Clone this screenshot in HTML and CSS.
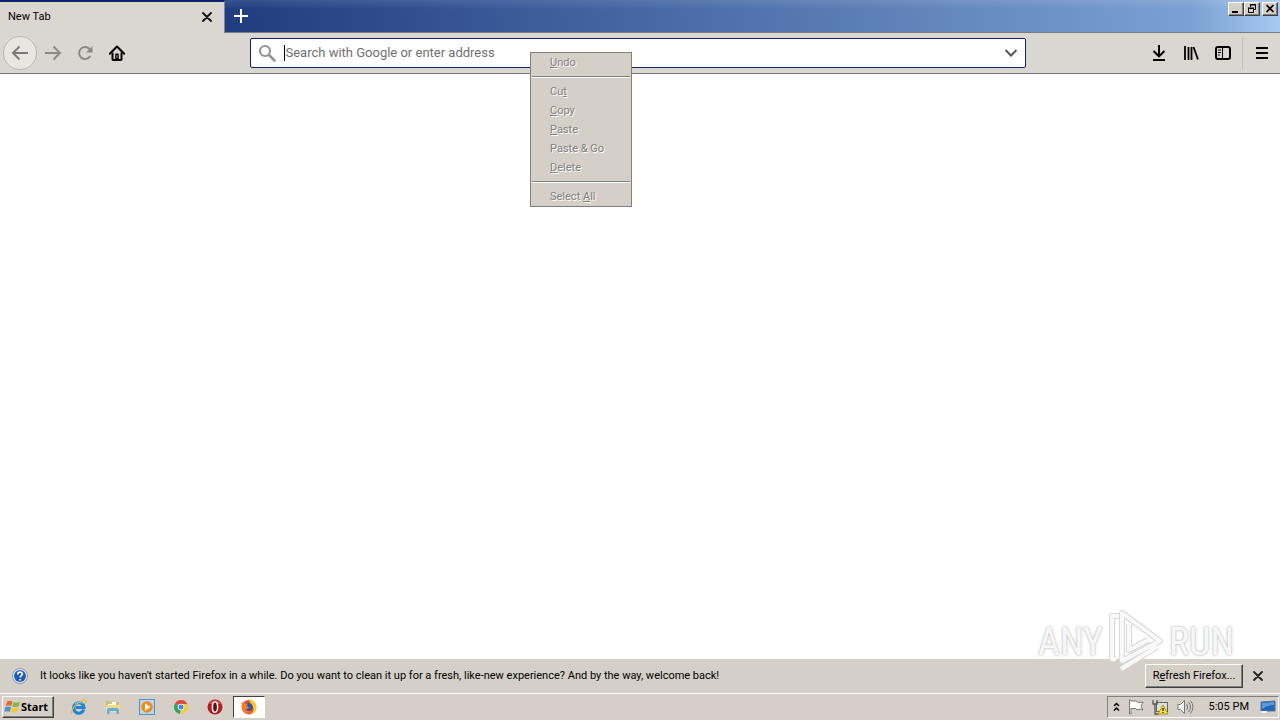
FILE: index.html
```html
<!DOCTYPE html>
<html lang="en">
<head>
<meta charset="utf-8">
<title>New Tab</title>
<link rel="stylesheet" href="styles.css">
</head>
<body>
<header class="tabstrip">
  <div class="tab">
    <button class="tab-label">New Tab</button>
    <button class="icon-btn tab-close" aria-label="Close tab"><svg width="10" height="10" viewBox="0 0 10 10"><path d="M1 1l8 8M9 1l-8 8" stroke="#111" stroke-width="1.8" stroke-linecap="round"/></svg></button>
  </div>
  <button class="icon-btn new-tab" aria-label="Open a new tab"><svg width="14" height="14" viewBox="0 0 14 14"><path d="M7 0v14M0 7h14" stroke="#fff" stroke-width="2"/></svg></button>
  <div class="window-controls">
    <button class="win-btn" aria-label="Minimize"><svg width="14" height="12" viewBox="0 0 14 12"><path d="M3 9h6" stroke="#000" stroke-width="2"/></svg></button>
    <button class="win-btn" aria-label="Restore"><svg width="14" height="12" viewBox="0 0 14 12"><path d="M5.500 4V1.500h5v5H8M5 2h6M3.500 5.500h5v4h-5zM3 5h6" fill="none" stroke="#000"/></svg></button>
    <button class="win-btn win-close" aria-label="Close"><svg width="14" height="12" viewBox="0 0 14 12"><path d="M3.500 2l7 7M10.500 2l-7 7" stroke="#000" stroke-width="1.600"/></svg></button>
  </div>
</header>

<nav class="toolbar">
  <div class="nav-buttons">
    <button class="icon-btn back" aria-label="Back"><svg width="18" height="16" viewBox="0 0 18 16"><path d="M17 8H2M8.500 1.500L2 8l6.500 6.500" fill="none" stroke="#7d7b77" stroke-width="2"/></svg></button>
    <button class="icon-btn tool" aria-label="Forward"><svg width="18" height="16" viewBox="0 0 18 16"><path d="M1 8h15M9.500 1.500L16 8l-6.500 6.500" fill="none" stroke="#8b8985" stroke-width="2"/></svg></button>
    <button class="icon-btn tool" aria-label="Reload"><svg width="16" height="16" viewBox="0 0 16 16"><path d="M13.300 11a6 6 0 1 1-.3-6.500" fill="none" stroke="#8b8985" stroke-width="2"/><path d="M15.500 1v6.500H9z" fill="#8b8985"/></svg></button>
    <button class="icon-btn tool" aria-label="Home"><svg width="16" height="16" viewBox="0 0 16 16"><path d="M.8 8.700L8 1.500l7.200 7.200" fill="none" stroke="#000" stroke-width="2" stroke-linecap="round" stroke-linejoin="round"/><path d="M3.500 7.500v6.700c0 .5.300.8.800.8h7.400c.5 0 .8-.3.800-.8V7.500" fill="none" stroke="#000" stroke-width="2"/><path d="M6.200 15V9.500c0-.6.4-1 1-1h1.600c.6 0 1 .4 1 1V15z"/><path d="M8 10v3" stroke="#aaa"/></svg></button>
  </div>
  <div class="urlbar">
    <svg class="search-icon" width="18" height="18" viewBox="0 0 18 18"><circle cx="7" cy="7" r="5" fill="none" stroke="#949494" stroke-width="2.200"/><path d="M11 11l5.500 5.500" stroke="#949494" stroke-width="2.600" stroke-linecap="round"/></svg>
    <span class="caret"></span>
    <input class="url-input" type="text" aria-label="Address" placeholder="Search with Google or enter address">
    <button class="icon-btn history" aria-label="Show history"><svg width="14" height="10" viewBox="0 0 14 10"><path d="M1.500 2L7 7.500 12.500 2" fill="none" stroke="#555" stroke-width="2"/></svg></button>
  </div>
  <div class="tools">
    <button class="icon-btn tool" aria-label="Downloads"><svg width="16" height="18" viewBox="0 0 16 18"><path d="M8 1v11M2.500 7L8 12.300 13.500 7M2 16h12" fill="none" stroke="#000" stroke-width="2"/></svg></button>
    <button class="icon-btn tool" aria-label="Library"><svg width="16" height="16" viewBox="0 0 16 16"><path d="M2 1v14M5.500 2v13M8.500 2v13M10.500 2l4.500 12.500" stroke="#000" stroke-width="1.800"/></svg></button>
    <button class="icon-btn tool" aria-label="Sidebars"><svg width="16" height="14" viewBox="0 0 16 14"><rect x="1" y="1" width="14" height="12" rx="2" fill="none" stroke="#000" stroke-width="2"/><path d="M7.500 1v12" stroke="#000"/><path d="M3 4h3M3 6.500h3M3 9h2" stroke="#000"/></svg></button>
    <button class="icon-btn app-menu" aria-label="Open menu"><svg width="12" height="14" viewBox="0 0 12 14"><path d="M0 2h12M0 7h12M0 12h12" stroke="#000" stroke-width="2"/></svg></button>
  </div>
</nav>

<main class="page"></main>

<section class="notification">
  <svg class="help" width="16" height="16" viewBox="0 0 16 16"><circle cx="8" cy="8" r="7.500" fill="#eef3fb" stroke="#8793ad"/><circle cx="8" cy="8" r="6" fill="#2159b8"/><path d="M5.800 6.400c0-3 4.600-2.900 4.600-.3 0 1.500-2.200 1.600-2.200 3.300M8.200 11v1.600" fill="none" stroke="#fff" stroke-width="1.700"/></svg>
  <p class="message">It looks like you haven't started Firefox in a while. Do you want to clean it up for a fresh, like-new experience? And by the way, welcome back!</p>
  <button class="refresh">R<u>e</u>fresh Firefox...</button>
  <button class="icon-btn dismiss" aria-label="Dismiss"><svg width="10" height="10" viewBox="0 0 10 10"><path d="M1 1l8 8M9 1l-8 8" stroke="#222" stroke-width="1.800" stroke-linecap="round"/></svg></button>
</section>

<footer class="taskbar">
  <button class="start"><svg width="17" height="16" viewBox="0 0 17 16"><path d="M3 2.500Q6 .8 8.500 2.500L7.300 7Q4.500 5.700 1.800 7z" fill="#e9682f"/><path d="M9.500 3Q12.500 4.500 16 2.500L14.800 7Q11.500 8.800 8.300 7.300z" fill="#84b840"/><path d="M1.500 8Q4.500 6.800 7 8.200L5.800 12.800Q3 11.500.3 12.800z" fill="#4a90d4"/><path d="M8 8.500q3.200 1.500 6.500-.2l-1.200 4.500q-3.300 1.700-6.500 0z" fill="#f6c63c"/></svg><span>Start</span></button>
  <div class="quick">
    <button class="icon-btn task" aria-label="Internet Explorer"><svg width="16" height="16" viewBox="0 0 16 16"><path d="M12.800 10.500A5.200 5.200 0 1 1 13 8.500H4.500" fill="none" stroke="#1f86d2" stroke-width="3"/><path d="M1 14.500C-1 11 8 1 13.500 1c2 0 1.600 2.500.8 4" fill="none" stroke="#e9b92e" stroke-width="1.200"/><path d="M4 4.500Q8 1.500 11.500 4.500" fill="none" stroke="#7dd0f3"/></svg></button>
    <button class="icon-btn task" aria-label="Windows Explorer"><svg width="16" height="16" viewBox="0 0 16 16"><path d="M1 2h5l1 1h7v10H1z" fill="#dfb958"/><path d="M3 3h8v3H3z" fill="#fff"/><path d="M3 4h4" stroke="#49a942"/><path d="M1 6h14v7H1z" fill="#f3d988"/><path d="M2 15v-4q0-2 2-2h8q2 0 2 2v4h-2.500v-3h-7v3z" fill="#5fb0dc"/></svg></button>
    <button class="icon-btn task" aria-label="Media Player"><svg width="16" height="16" viewBox="0 0 16 16"><rect x=".5" y=".5" width="15" height="15" fill="#b6d7ef" stroke="#5593c4"/><circle cx="8" cy="8" r="5.800" fill="#f28a1c"/><path d="M6 4.500v7L11.500 8z" fill="#fff"/></svg></button>
    <button class="icon-btn task" aria-label="Chrome"><svg width="16" height="16" viewBox="0 0 16 16"><path d="M8 8L2 4.500A7 7 0 0 1 14.300 5H8z" fill="#df4937"/><path d="M8 8l-1 7A7 7 0 0 1 2 4.500z" fill="#2fa45a"/><path d="M8 5h6.300A7 7 0 0 1 7 15l3.500-6z" fill="#f6cb3d"/><circle cx="8" cy="8" r="3.300" fill="#fff"/><circle cx="8" cy="8" r="2.500" fill="#4285e8"/></svg></button>
    <button class="icon-btn task" aria-label="Opera"><svg width="16" height="16" viewBox="0 0 16 16"><circle cx="8" cy="8" r="7.500" fill="#b51c20"/><path d="M2 5a7 7 0 0 1 12 0z" fill="#d85450"/><ellipse cx="8" cy="8" rx="2.600" ry="5.300" fill="#650a0d" stroke="#fff" stroke-width="1.500"/></svg></button>
    <button class="icon-btn task active" aria-label="Firefox"><svg width="16" height="16" viewBox="0 0 16 16"><circle cx="8" cy="8.200" r="7.300" fill="#f04b32"/><path d="M8.500 0Q15 2 15.500 8q0 7-7 7.500 6-4 3-8Q8 5 8.500 0z" fill="#ffc927"/><circle cx="7.500" cy="8" r="4.300" fill="#3453a6"/><path d="M1 3l3 1.500 3 .3-1.500 2L8 8.500q-1 2.500-4 1.500 3 3.500 6.500 1.500Q8 15.500 3.500 14-.5 10 1 3z" fill="#f77a27"/></svg></button>
  </div>
  <div class="tray">
    <svg width="7" height="10" viewBox="0 0 7 10"><path d="M1 4l2.500-2.500L6 4M1 8.500L3.500 6 6 8.500" fill="none" stroke="#000" stroke-width="1.500"/></svg>
    <svg width="16" height="16" viewBox="0 0 16 16"><path d="M1.500 1v14h1.500V9.500h5L9 11q3-2 6 0l-2-4 2-4q-3 1-5.500 0L8 2H3V1z" fill="#fff" stroke="#777"/></svg>
    <svg width="17" height="16" viewBox="0 0 17 16"><rect x="4.500" y="3.500" width="11" height="9" fill="#dedede" stroke="#666"/><path d="M1 1v4h4V1M3 5v10h4" fill="none" stroke="#555" stroke-width="1.300"/><path d="M11 6l5 9H6z" fill="#ffe32d" stroke="#aa9320"/><path d="M11 9v3M11 13v1" stroke="#222" stroke-width="1.300"/></svg>
    <svg width="17" height="16" viewBox="0 0 17 16"><path d="M1 5.500h2.500L7.500 1.500v13l-4-4H1z" fill="#fff" stroke="#777"/><path d="M9.500 5q2.500 3 0 6M11.500 3q4 5 0 10M13.500 1.500q5 6.500 0 13" fill="none" stroke="#777"/></svg>
    <time class="clock">5:05 PM</time>
    <svg width="16" height="14" viewBox="0 0 16 14"><path d="M1 2l14-1v10H1z" fill="#2466b5" stroke="#4b789e"/><path d="M2 3l12-1v3Q7 5 2 9z" fill="#5d9bd8"/><path d="M1 12h6" stroke="#eee" stroke-width="2"/></svg>
  </div>
</footer>

<div class="context-menu" role="menu">
  <button class="menu-item" role="menuitem" disabled><u>U</u>ndo</button>
  <hr class="separator">
  <button class="menu-item" role="menuitem" disabled>Cu<u>t</u></button>
  <button class="menu-item" role="menuitem" disabled><u>C</u>opy</button>
  <button class="menu-item" role="menuitem" disabled><u>P</u>aste</button>
  <button class="menu-item" role="menuitem" disabled>Paste &amp; Go</button>
  <button class="menu-item" role="menuitem" disabled><u>D</u>elete</button>
  <hr class="separator">
  <button class="menu-item" role="menuitem" disabled>Select <u>A</u>ll</button>
</div>

<div class="watermark">
  <span>ANY</span>
  <svg width="56" height="64" viewBox="0 0 56 64"><g fill="none" stroke-linejoin="round"><path d="M8 49H4V6h7M14 3v48L52 31 14 3zM21 14v26l19-10M13 59l36-22" stroke="#d8d8d8" stroke-width="6"/><path d="M8 49H4V6h7M14 3v48L52 31 14 3zM21 14v26l19-10M13 59l36-22" stroke="#fff" stroke-opacity=".85" stroke-width="4"/></g></svg>
  <span>RUN</span>
</div>
</body>
</html>
```
FILE: styles.css
```css
* { box-sizing: border-box; }
html, body { height: 100%; }
body {
  margin: 0;
  display: flex;
  flex-direction: column;
  position: relative;
  overflow: hidden;
  background: #fff;
  color: #000;
  font: 11px/16px Roboto, sans-serif;
}
button { font: inherit; color: inherit; padding: 0; border: 0; background: none; }
svg { display: block; flex: none; }
.icon-btn { display: flex; align-items: center; justify-content: center; flex: none; }

.tabstrip {
  display: flex;
  height: 33px;
  flex: none;
  background: linear-gradient(rgba(255,255,255,.1), transparent 30%), linear-gradient(90deg, #1d3778 0, #223f82 20%, #7ba0d2 93%, #a6caf0);
  border-bottom: 1px solid #777b85;
}
.tab {
  display: flex;
  align-items: center;
  width: 225px;
  height: 33px;
  padding: 0 7px 2px 8px;
  background: #dad6d0;
  border-top: 2px solid #0a246a;
  border-right: 1px solid #858585;
}
.tab-label { flex: 1; text-align: left; }
.tab-close { width: 20px; height: 20px; }
.new-tab { width: 32px; height: 32px; }
.window-controls { display: flex; margin-left: auto; padding: 2px; }
.win-btn {
  display: flex;
  width: 16px;
  height: 14px;
  background: #d4d0c8;
  border: 1px solid;
  border-color: #fff #404040 #404040 #fff;
  box-shadow: inset -1px -1px #808080;
}
.win-close { margin-left: 2px; }

.toolbar {
  display: flex;
  align-items: center;
  flex: none;
  height: 41px;
  padding: 0 0 0 3px;
  background: #dad6d0;
  border-bottom: 1px solid #777;
}
.nav-buttons, .tools { display: flex; align-items: center; flex: none; }
.back { width: 34px; height: 34px; border: 1px solid #bbb8b3; border-radius: 50%; background: #e9e6e2; }
.tool { width: 32px; height: 32px; }
.urlbar {
  display: flex;
  align-items: center;
  flex: 1;
  height: 30px;
  margin: 0 9.2%;
  padding: 0 7px;
  background: #fff;
  border: 1px solid #0a246a;
  border-radius: 2px;
}
.caret { width: 1px; height: 16px; margin-left: 8px; background: #000; }
.url-input {
  flex: 1;
  min-width: 0;
  padding: 0;
  border: 0;
  outline: 0;
  background: none;
  font: 13px/18px Roboto, sans-serif;
}
.url-input::placeholder { color: #707070; opacity: 1; }
.app-menu { width: 38px; height: 32px; border-left: 1px solid #c2beb8; margin-left: 3px; }

.page { flex: 1; }

.notification {
  display: flex;
  align-items: center;
  flex: none;
  height: 34px;
  padding: 0 12px;
  background: #d4d0c8;
}
.message { flex: 1; margin: 0 0 0 12px; }
.refresh {
  width: 98px;
  height: 24px;
  border: 1px solid;
  border-color: #fff #404040 #404040 #fff;
  box-shadow: inset -1px -1px #808080;
}
.dismiss { width: 20px; height: 20px; margin-left: 5px; }

.taskbar {
  display: flex;
  align-items: center;
  flex: none;
  height: 27px;
  padding: 0 1px 0 2px;
  background: #d6cfc8;
  border-top: 1px solid #fff;
}
.start {
  display: flex;
  align-items: center;
  width: 52px;
  height: 22px;
  padding-left: 1px;
  border: 1px solid;
  border-color: #fff #404040 #404040 #fff;
  box-shadow: inset -1px -1px #808080;
  font: 700 11px/16px "Noto Sans", sans-serif;
}
.quick { display: flex; align-items: center; gap: 2px; margin-left: 9px; }
.task { width: 32px; height: 22px; }
.active { background: #fff; border: 1px solid; border-color: #404040 #fff #fff #404040; }
.tray {
  display: flex;
  align-items: center;
  gap: 8px;
  height: 22px;
  margin-left: auto;
  padding: 0 2px 0 5px;
  border: 1px solid;
  border-color: #808080 #fff #fff #808080;
}
.clock { margin: 0 3px 0 7px; }

.context-menu {
  position: absolute;
  left: 530px;
  top: 52px;
  width: 102px;
  background: #d4d0c8;
  border: 1px solid #808080;
}
.menu-item {
  display: block;
  width: 100%;
  height: 19px;
  padding-left: 19px;
  text-align: left;
  color: #808080;
  text-shadow: 1px 1px #fff;
}
.separator {
  height: 2px;
  margin: 4px 1px;
  border: 0;
  border-top: 1px solid #808080;
  border-bottom: 1px solid #fff;
}

.watermark {
  position: absolute;
  right: 46px;
  bottom: 46px;
  display: flex;
  align-items: center;
  gap: 5px;
  color: rgba(255,255,255,.9);
  font: 38px/40px "Liberation Sans Narrow", "Roboto Condensed", Roboto, sans-serif;
  text-shadow: 0 0 2px #bbb, 0 0 3px #ccc;
}
```
